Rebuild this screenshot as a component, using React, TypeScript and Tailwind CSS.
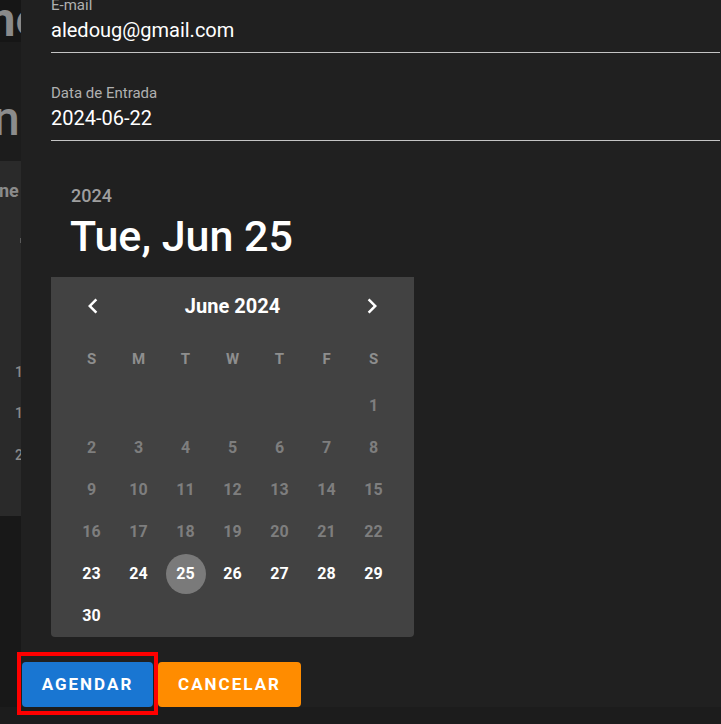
import React from "react";

const ChevronL = () => (
  <svg width="30" height="30" viewBox="0 0 24 24" fill="#ffffff">
    <path d="M15.41 7.41 14 6l-6 6 6 6 1.41-1.41L10.83 12z" />
  </svg>
);
const ChevronR = () => (
  <svg width="30" height="30" viewBox="0 0 24 24" fill="#ffffff">
    <path d="M10 6 8.59 7.41 13.17 12l-4.58 4.59L10 18l6-6z" />
  </svg>
);

const weekdays = ["S", "M", "T", "W", "T", "F", "S"];

function Calendar() {
  const cells: (number | null)[] = [null, null, null, null, null, null];
  for (let d = 1; d <= 30; d++) cells.push(d);
  while (cells.length < 42) cells.push(null);
  return (
    <div className="w-[363px] bg-[#424242] rounded-b-[4px]">
      <div className="h-[57px] flex items-center justify-between px-[22px]">
        <div className="w-[40px] h-[40px] flex items-center justify-center">
          <ChevronL />
        </div>
        <div className="text-[20px] font-bold text-white">June 2024</div>
        <div className="w-[40px] h-[40px] flex items-center justify-center">
          <ChevronR />
        </div>
      </div>
      <div className="h-[51px] grid grid-cols-[repeat(7,47px)] pl-[17px] items-center">
        {weekdays.map((w, i) => (
          <div key={i} className="text-center text-[15px] font-bold text-[#8e8e8e]">
            {w}
          </div>
        ))}
      </div>
      <div className="grid grid-cols-[repeat(7,47px)] pl-[17px]">
        {cells.map((d, i) => (
          <div key={i} className="h-[42px] flex items-center justify-center">
            {d !== null && (
              <div
                className={
                  "w-[40px] h-[40px] rounded-full flex items-center justify-center text-[16px] font-bold " +
                  (d === 25
                    ? "bg-[#7a7a7a] text-white"
                    : d >= 23
                    ? "text-white"
                    : "text-[#7e7e7e]")
                }
              >
                {d}
              </div>
            )}
          </div>
        ))}
      </div>
    </div>
  );
}

export default function App() {
  return (
    <div
      className="relative w-[721px] h-[724px] bg-[#1c1c1c] overflow-hidden"
      style={{ fontFamily: "Roboto, 'Noto Sans', sans-serif" }}
    >
      <div className="flex h-[707px]">
        {/* background page strip */}
        <div className="w-[21px] flex flex-col overflow-hidden">
          <div className="h-[42px] bg-[#161616] overflow-hidden">
            <div className="whitespace-nowrap -ml-[26px] text-[48px] leading-[48px] font-bold text-[#8a8a8a] -mt-[4px]">
              me
            </div>
          </div>
          <div className="h-[119px] bg-[#1c1c1c] overflow-hidden">
            <div className="whitespace-nowrap -ml-[7px] mt-[53px] text-[48px] leading-[48px] font-medium text-[#8c8c8c]">
              n
            </div>
          </div>
          <div className="h-[355px] bg-[#2a2a2a] overflow-hidden">
            <div className="whitespace-nowrap -ml-[1px] mt-[20px] text-[18px] leading-[20px] font-bold text-[#8b8b8b]">
              ne
            </div>
            <div className="ml-[20px] mt-[37px] w-[1px] h-[5px] bg-[#5a5a5a]" />
            <div className="whitespace-nowrap ml-[15px] mt-[121px] text-[14px] leading-[16px] font-medium text-[#8a8a8a]">
              1
            </div>
            <div className="whitespace-nowrap ml-[15px] mt-[25px] text-[14px] leading-[16px] font-medium text-[#8a8a8a]">
              1
            </div>
            <div className="whitespace-nowrap ml-[15px] mt-[26px] text-[14px] leading-[16px] font-medium text-[#8a8a8a]">
              2
            </div>
          </div>
          <div className="flex-1 bg-[#181818]" />
        </div>

        {/* dialog */}
        <div className="flex-1 bg-[#202020] overflow-hidden">
          <div className="pl-[30px] pr-[1px]">
            <div className="-mt-[2px] text-[15px] leading-[15px] text-[#b0b0b0]">E-mail</div>
            <div className="mt-[5px] text-[20px] leading-[24px] text-white pb-[10px] border-b border-[#c4c4c4]">
              aledoug@gmail.com
            </div>
            <div className="mt-[33px] text-[15px] leading-[15px] text-[#b0b0b0]">Data de Entrada</div>
            <div className="mt-[5px] text-[20px] leading-[24px] text-white pb-[10px] border-b border-[#c4c4c4]">
              2024-06-22
            </div>
            <div className="mt-[45px] pl-[20px] text-[18px] leading-[20px] font-medium text-[#9e9e9e]">2024</div>
            <div className="mt-[6px] pl-[19px] text-[43px] leading-[48px] font-medium text-white">
              Tue, Jun 25
            </div>
            <div className="mt-[17px]">
              <Calendar />
            </div>
          </div>
          <div className="mt-[25px] pl-[1px] flex gap-[5px]">
            <button className="w-[131px] h-[45px] rounded-[4px] bg-[#1976d2] text-white text-[17px] font-bold tracking-[2px]">
              AGENDAR
            </button>
            <button className="w-[143px] h-[45px] rounded-[4px] bg-[#ff8c00] text-white text-[17px] font-bold tracking-[2px]">
              CANCELAR
            </button>
          </div>
        </div>
      </div>
      <div className="absolute left-[17px] top-[652px] w-[141px] h-[63px] border-4 border-[#ff0000]" />
    </div>
  );
}
